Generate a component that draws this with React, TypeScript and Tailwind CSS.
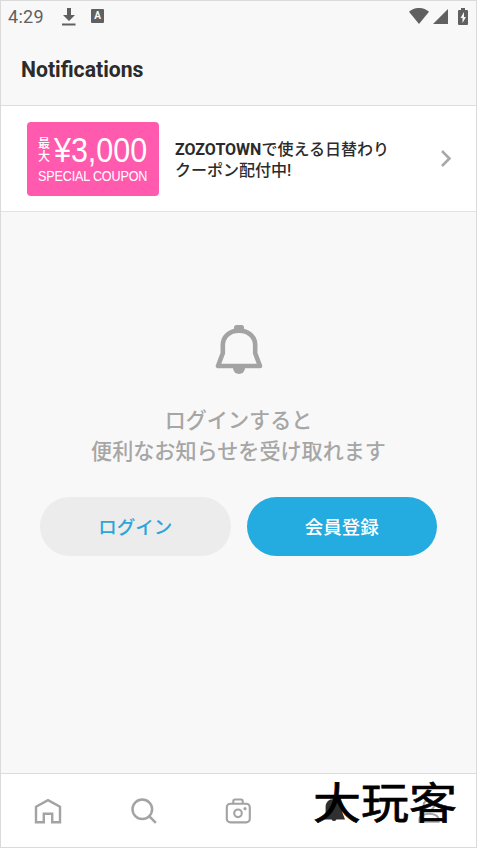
import React from 'react';

function StatusBar() {
  return (
    <div className="flex h-8 items-center justify-between pl-[7px] pr-[8px] text-[#606060]">
      <div className="flex items-center">
        <span className="w-[54px] text-[18px] leading-8 tracking-[0.3px]">4:29</span>
        <svg className="-mt-px h-[18px] w-[14px]" viewBox="0 0 14 18" fill="currentColor">
          <path d="M5 0h4v7h4l-6 6-6-6h4zM0 15.5h13.5v2H0z" />
        </svg>
        <div className="-mt-[2px] ml-[15px] flex h-[14px] w-[13px] items-center justify-center rounded-[1px] bg-[#606060] text-[10px] font-bold leading-none text-[#f8f8f8]">
          A
        </div>
      </div>
      <div className="-mt-[2px] flex items-center">
        <svg className="h-[16px] w-[20px]" viewBox="0 0 20 16" fill="currentColor">
          <path d="M0 3.8C6-1.3 14-1.3 20 3.8L10 16z" />
        </svg>
        <svg className="ml-[4px] h-[15px] w-[15px]" viewBox="0 0 15 15" fill="currentColor">
          <path d="M15 0v15H0z" />
        </svg>
        <svg className="ml-[10px] h-[17px] w-[10px]" viewBox="0 0 10 17" fill="currentColor">
          <path fillRule="evenodd" d="M3 0h4v2h2q1 0 1 1v13q0 1-1 1H1q-1 0-1-1V3q0-1 1-1h2zM6 4L2.5 10H4.5v5L8 9H6z" />
        </svg>
      </div>
    </div>
  );
}

function CouponBanner() {
  return (
    <div className="flex h-[74px] w-[132px] shrink-0 flex-col rounded-[4px] bg-[#ff5aae] pl-[11px] pt-[11px] font-['Liberation_Sans','Noto_Sans_CJK_JP',sans-serif] text-white">
      <div className="flex h-[33px] items-center">
        <div className="w-[16px] shrink-0 pt-[4px] text-[12px] font-medium leading-[13px]">
          <div>最</div>
          <div>大</div>
        </div>
        <span className="shrink-0 origin-left scale-x-[0.87] whitespace-nowrap text-[35px] leading-[33px]">¥3,000</span>
      </div>
      <span className="mt-[2px] w-[124px] origin-left scale-x-[0.87] whitespace-nowrap text-[14.5px] leading-[17px] tracking-[-0.2px]">
        SPECIAL COUPON
      </span>
    </div>
  );
}

function BellIcon() {
  return (
    <svg className="h-[49px] w-[48px]" viewBox="0 0 48 49">
      <rect x="19" y="0" width="10" height="7" rx="2.5" fill="#a3a3a3" />
      <path d="M18 43h12a6 6 0 0 1-12 0z" fill="#a3a3a3" />
      <path
        d="M3 41h42L40.2 28.3V20.5C40.2 11.5 33.5 5.6 24 5.6S7.8 11.5 7.8 20.5v7.8z"
        fill="none"
        stroke="#a3a3a3"
        strokeWidth="4.6"
        strokeLinejoin="round"
      />
    </svg>
  );
}

function TabBar() {
  return (
    <nav className="relative flex h-[74px] shrink-0 items-center border-t border-[#dcdcdc] bg-white text-[#a3a3a3]">
      <div className="flex flex-1 justify-center">
        <svg className="mr-[2px] h-[26px] w-[28px]" viewBox="0 0 28 26" fill="none" stroke="currentColor" strokeWidth="2.4">
          <path d="M2 8.7L14 2.2l12 6.5v15.6h-7.8v-8.6h-8.4v8.6H2z" />
        </svg>
      </div>
      <div className="flex flex-1 justify-center">
        <svg className="h-[26px] w-[26px]" viewBox="0 0 26 26" fill="none" stroke="currentColor" strokeWidth="2.5">
          <circle cx="11.3" cy="11.3" r="9.8" />
          <path d="M18.4 18.4l6.4 6.4" />
        </svg>
      </div>
      <div className="flex flex-1 justify-center">
        <svg className="mr-px h-[26px] w-[26px]" viewBox="0 0 26 26" fill="none" stroke="currentColor" strokeWidth="2.1">
          <rect x="1.8" y="5.8" width="23" height="18.6" rx="3.5" />
          <path d="M8.3 5.5V3.2q0-1.7 1.7-1.7h6q1.7 0 1.7 1.7v2.3" />
          <circle cx="13" cy="15.3" r="3.8" />
          <circle cx="20" cy="10.7" r="1.6" fill="currentColor" stroke="none" />
        </svg>
      </div>
      <div className="flex flex-1 justify-center text-[#303030]">
        <svg className="ml-px h-[26px] w-[24px]" viewBox="0 0 24 26" fill="currentColor">
          <path d="M12 1c-5.3 0-8.4 3.3-8.4 8v5.5L1 21.5h8.6a2.6 2.6 0 0 0 4.8 0H23l-2.6-7V9c0-4.7-3.1-8-8.4-8z" />
        </svg>
      </div>
      <div className="flex flex-1 justify-center">
        <svg className="ml-px h-[26px] w-[26px]" viewBox="0 0 26 26" fill="none" stroke="currentColor" strokeWidth="2.1">
          <circle cx="13" cy="7" r="5.2" />
          <path d="M3.5 23.8v-2.5c0-7.5 19-7.5 19 0v2.5z" />
        </svg>
      </div>
      {/* Brand watermark over the last two tabs */}
      <span
        lang="zh"
        className="absolute left-[312px] top-0 origin-center scale-y-90 whitespace-nowrap font-['Noto_Sans_CJK_SC',sans-serif] text-[48px] font-normal leading-[52px] text-black [-webkit-text-stroke:0.8px_black]"
      >
        大玩客
      </span>
    </nav>
  );
}

export default function App() {
  return (
    <div
      lang="ja"
      className="flex h-[848px] w-[477px] flex-col overflow-hidden border border-[#dadada] bg-[#f8f8f8] font-[Roboto,'Noto_Sans_CJK_JP',sans-serif]"
    >
      <StatusBar />
      <header className="flex h-[73px] shrink-0 items-center border-b border-[#dedede] pl-[20px] pt-px">
        <h1 className="text-[21.2px] font-bold leading-none text-[#2b2b2b]">Notifications</h1>
      </header>

      <div className="flex h-[106px] shrink-0 items-center border-b border-[#e2e2e2] bg-white pl-[26px] pr-[25px]">
        <CouponBanner />
        <p className="ml-4 flex-1 whitespace-nowrap pt-[2px] text-[16px] font-medium leading-[21px] text-[#2b2b2b]">
          <span className="font-bold">ZOZOTOWN</span>で使える日替わり
          <br />
          クーポン配付中!
        </p>
        <svg className="h-[17px] w-[10px]" viewBox="0 0 10 17" fill="none" stroke="#a8a8a8" strokeWidth="2.5">
          <path d="M1 1l7.4 7.5L1 16" />
        </svg>
      </div>

      <main className="flex flex-1 flex-col items-center pt-[113px]">
        <BellIcon />
        <p className="mt-[31px] text-center text-[21.1px] font-medium leading-[31px] text-[#a6a6a6]">
          ログインすると
          <br />
          便利なお知らせを受け取れます
        </p>
        <div className="mt-[30px] flex gap-4 text-[18.5px] font-medium">
          <button className="h-[59px] w-[190.5px] rounded-full bg-[#ececec] pt-[5px] text-[#2ba5da]">ログイン</button>
          <button className="h-[59px] w-[190.5px] rounded-full bg-[#24abdf] pt-[5px] text-white">会員登録</button>
        </div>
      </main>

      <TabBar />
    </div>
  );
}
